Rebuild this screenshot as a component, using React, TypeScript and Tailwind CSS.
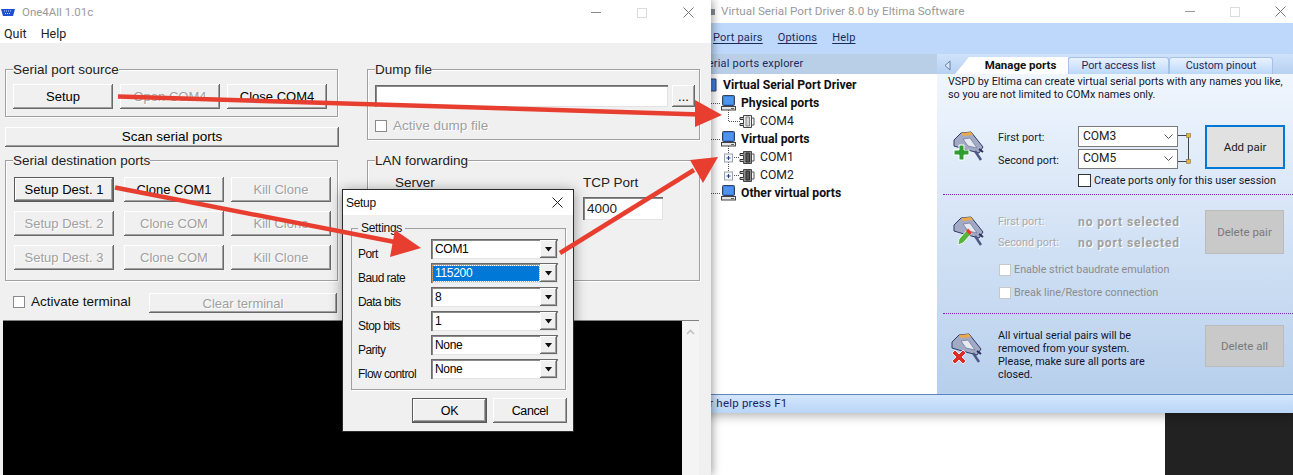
import React from "react";

const RAISED =
  "shadow-[inset_-1px_-1px_0_#696969,inset_1px_1px_0_#fff,inset_-2px_-2px_0_#a0a0a0]";
const SUNKEN =
  "shadow-[inset_1px_1px_0_#696969,inset_2px_2px_0_#8a8a8a,inset_-1px_-1px_0_#e3e3e3]";
const DISABLED = "text-[#a0a0a0] [text-shadow:1px_1px_0_#fff]";

function Btn({
  label,
  off,
  main,
  className = "",
}: {
  label: string;
  off?: boolean;
  main?: boolean;
  className?: string;
}) {
  return (
    <button
      className={`flex items-center justify-center bg-[#f0f0f0] pt-[1px] text-[13px] ${RAISED} ${
        off ? DISABLED : "text-black"
      } ${main ? "border border-[#5a5a5a]" : ""} ${className}`}
    >
      {label}
    </button>
  );
}

function Group({
  title,
  className = "",
  children,
}: {
  title: string;
  className?: string;
  children?: React.ReactNode;
}) {
  return (
    <div
      className={`relative border border-[#a0a0a0] shadow-[1px_1px_0_#fff,inset_1px_1px_0_#fff] ${className}`}
    >
      <span className="absolute -top-[8px] left-[7px] bg-[#f0f0f0] text-[13.5px] leading-[16px] text-[#222]">
        {title}
      </span>
      {children}
    </div>
  );
}

function Check({ className = "" }: { className?: string }) {
  return (
    <span
      className={`block h-[12px] w-[12px] border border-[#8a8a8a] bg-white ${className}`}
    />
  );
}

function Combo({ value, selected }: { value: string; selected?: boolean }) {
  return (
    <div
      className={`flex h-[20px] w-[127px] items-center bg-white pl-[2px] pr-[1px] ${SUNKEN}`}
    >
      <span
        className={`flex-1 pl-[2px] text-[12px] leading-[15px] tracking-[-0.3px] ${
          selected
            ? "mr-[1px] bg-[#0078d7] text-white outline-1 outline-dotted outline-[#e8a050]"
            : "text-black"
        }`}
      >
        {value}
      </span>
      <span
        className={`flex h-[18px] w-[17px] items-center justify-center bg-[#f0f0f0] ${RAISED}`}
      >
        <svg width="9" height="5" viewBox="0 0 9 5">
          <path d="M1 0h7L4.500 4.500z" fill="#111" />
        </svg>
      </span>
    </div>
  );
}

function DialogRow({
  label,
  value,
  selected,
}: {
  label: string;
  value: string;
  selected?: boolean;
}) {
  return (
    <div className="grid h-[24px] grid-cols-[73px_127px] items-start">
      <span className="mt-[8px] text-[12px] leading-[15px] tracking-[-0.55px] text-[#111]">
        {label}
      </span>
      <Combo value={value} selected={selected} />
    </div>
  );
}

function WinControls({ gap, color }: { gap: string; color: string }) {
  return (
    <div className={`flex items-center ${gap}`}>
      <span className={`block h-[1px] w-[10px] ${color}`} />
      <span className="block h-[10px] w-[10px] border border-[#dcdcdc]" />
      <svg width="11" height="11" viewBox="0 0 11 11">
        <path d="M.5.5l10 10M10.500.5l-10 10" stroke="#777" fill="none" />
      </svg>
    </div>
  );
}

function LeftWindow() {
  return (
    <div className="absolute left-0 top-0 z-10 flex h-[475px] w-[711px] flex-col bg-[#f0f0f0] font-['Liberation_Sans',sans-serif] shadow-[2px_0_8px_rgba(0,0,0,0.35)]">
      <div className="h-[43px] bg-white font-['Roboto',sans-serif]">
        <div className="flex h-[25px] items-center pr-[17px]">
          <svg width="14" height="7" viewBox="0 0 14 7" className="ml-[1px]">
            <path d="M0 0h14l-2 7H2z" fill="#1c4fd0" />
            <path d="M3 2h8M4 4.500h6" stroke="#cfe0ff" strokeDasharray="1 1" />
          </svg>
          <span className="ml-[7px] flex-1 pt-[1px] text-[11.5px] text-[#9a9a9a]">
            One4All 1.01c
          </span>
          <WinControls gap="gap-[36px]" color="bg-[#888]" />
        </div>
        <div className="flex h-[18px] items-center gap-[14px] pl-[4px] pt-[1px] text-[12.5px] text-[#222]">
          <span>Quit</span>
          <span>Help</span>
        </div>
      </div>

      <div className="grid grid-cols-[333px_333px] gap-x-[29px] px-[5px] pt-[26px]">
        <div className="flex flex-col">
          <Group title="Serial port source" className="h-[48px]">
            <div className="flex gap-[7px] pl-[7px] pt-[14px]">
              <Btn label="Setup" className="h-[25px] w-[100px]" />
              <Btn label="Open COM4" off className="h-[25px] w-[100px]" />
              <Btn label="Close COM4" className="h-[25px] w-[100px]" />
            </div>
          </Group>
          <Btn
            label="Scan serial ports"
            className="mt-[10px] h-[20px] w-[334px] !text-[13.5px]"
          />
          <Group title="Serial destination ports" className="mt-[13px] h-[121px]">
            <div className="grid grid-cols-[110px_107px_100px] gap-y-[9px] pl-[8px] pt-[16px]">
              <Btn label="Setup Dest. 1" main className="h-[25px] w-[100px]" />
              <Btn label="Clone COM1" className="h-[25px] w-[100px]" />
              <Btn label="Kill Clone" off className="h-[25px] w-[100px]" />
              <Btn label="Setup Dest. 2" off className="h-[25px] w-[100px]" />
              <Btn label="Clone COM" off className="h-[25px] w-[100px]" />
              <Btn label="Kill Clone" off className="h-[25px] w-[100px]" />
              <Btn label="Setup Dest. 3" off className="h-[25px] w-[100px]" />
              <Btn label="Clone COM" off className="h-[25px] w-[100px]" />
              <Btn label="Kill Clone" off className="h-[25px] w-[100px]" />
            </div>
          </Group>
        </div>
        <div className="flex flex-col">
          <Group title="Dump file" className="h-[71px]">
            <div className="flex gap-[4px] pl-[7px] pt-[15px]">
              <div className={`h-[22px] w-[293px] bg-white ${SUNKEN}`} />
              <Btn label="..." className="h-[22px] w-[23px]" />
            </div>
            <div className="mt-[12px] flex items-center gap-[6px] pl-[7px]">
              <Check className="bg-[#f0f0f0]" />
              <span className={`text-[13.5px] leading-[14px] ${DISABLED}`}>
                Active dump file
              </span>
            </div>
          </Group>
          <Group title="LAN forwarding" className="mt-[20px] h-[121px]">
            <div className="flex pl-[27px] pt-[14px] text-[13.5px] leading-[16px] text-[#222]">
              <span className="w-[188px]">Server</span>
              <div className="flex flex-col">
                <span>TCP Port</span>
                <div
                  className={`mt-[6px] flex h-[23px] w-[80px] items-center bg-white pl-[4px] ${SUNKEN}`}
                >
                  4000
                </div>
              </div>
            </div>
          </Group>
        </div>
      </div>

      <div className="flex items-center pl-[13px] pt-[12px]">
        <Check className="mb-[3px]" />
        <span className="mb-[3px] ml-[6px] w-[118px] text-[13.5px] leading-[16px] text-[#111]">
          Activate terminal
        </span>
        <Btn label="Clear terminal" off className="h-[20px] w-[188px]" />
      </div>

      <div className="ml-[3px] mt-[7px] flex w-[696px] flex-1 border-t border-[#808080]">
        <div className="flex-1 bg-black" />
        <div className="flex w-[17px] justify-center bg-[#f4f4f4] pt-[8px]">
          <svg width="9" height="6" viewBox="0 0 9 6">
            <path d="M1 5l3.500-3.500L8 5" fill="none" stroke="#c0c0c0" strokeWidth="1.600" />
          </svg>
        </div>
      </div>
    </div>
  );
}

function SetupDialog() {
  return (
    <div className="absolute left-[342px] top-[189px] z-20 flex h-[243px] w-[232px] flex-col border border-[#2b2b2b] bg-[#f0f0f0] font-['Liberation_Sans',sans-serif] shadow-[0_2px_12px_rgba(0,0,0,0.4)]">
      <div className="flex h-[25px] items-center justify-between bg-white pl-[3px] pr-[10px]">
        <span className="text-[12px] tracking-[-0.3px] text-[#111]">Setup</span>
        <svg width="11" height="11" viewBox="0 0 11 11">
          <path d="M.5.5l10 10M10.500.5l-10 10" stroke="#222" fill="none" />
        </svg>
      </div>
      <div className="relative mx-[8px] mt-[13px] h-[162px] w-[215px] border border-[#a0a0a0] shadow-[1px_1px_0_#fff]">
        <span className="absolute -top-[8px] left-[6px] bg-[#f0f0f0] px-[3px] text-[12px] leading-[15px] tracking-[-0.3px] text-[#111]">
          Settings
        </span>
        <div className="pl-[6px] pt-[10px]">
          <DialogRow label="Port" value="COM1" />
          <DialogRow label="Baud rate" value="115200" selected />
          <DialogRow label="Data bits" value="8" />
          <DialogRow label="Stop bits" value="1" />
          <DialogRow label="Parity" value="None" />
          <DialogRow label="Flow control" value="None" />
        </div>
      </div>
      <div className="ml-[69px] mt-[8px] flex gap-[6px] [&>button]:text-[12.5px] [&>button]:tracking-[-0.4px]">
        <Btn label="OK" main className="h-[25px] w-[75px]" />
        <Btn label="Cancel" className="h-[25px] w-[74px]" />
      </div>
    </div>
  );
}

function Computer() {
  return (
    <svg width="15" height="16" viewBox="0 0 15 16" className="shrink-0">
      <rect x="1.500" y=".5" width="12" height="10" rx="1" fill="#3f7fe0" stroke="#33435f" />
      <rect x="3" y="2" width="9" height="7" fill="#4f93ee" />
      <rect x=".5" y="11.500" width="14" height="3.500" fill="#e6e6e6" stroke="#444" />
      <path d="M10 13.500h3" stroke="#666" />
    </svg>
  );
}

function PortGlyph({ dark }: { dark?: boolean }) {
  const fill = dark ? "#8f8f8f" : "#efefef";
  return (
    <svg width="16" height="15" viewBox="0 0 16 15" className="shrink-0">
      <path d="M4.500 1.500h8v12h-8z" fill={fill} stroke="#444" />
      <path d="M7 3h3.500v9H7z" fill={dark ? "#555" : "#d5d5d5"} stroke={dark ? "#333" : "#888"} />
      <path d="M4.500 3.500H1v2h3.500M4.500 9.500H1v2h3.500" fill="#cfcfcf" stroke="#333" />
      <path d="M12.500 4H15v7h-2.500" fill="none" stroke="#555" />
    </svg>
  );
}

function TreeRow({
  pad,
  bold,
  text,
  icon,
}: {
  pad: string;
  bold?: boolean;
  text: string;
  icon: React.ReactNode;
}) {
  return (
    <div className={`flex h-[18px] items-center ${pad}`}>
      {icon}
      <span
        className={`ml-[5px] whitespace-nowrap text-[12.2px] ${
          bold ? "font-bold text-[#101010]" : "text-[#1a1a2a]"
        }`}
      >
        {text}
      </span>
    </div>
  );
}

function Expander({ y }: { y: number }) {
  return (
    <g>
      <rect x={34.5} y={y - 4} width="8" height="8" fill="#f4f6fa" stroke="#9aa2b0" />
      <path d={`M36.500 ${y}h4M38.500 ${y - 2}v4`} stroke="#24408a" />
    </g>
  );
}

function PortBadge({ kind }: { kind: "add" | "edit" | "del" }) {
  return (
    <svg width="38" height="34" viewBox="0 0 38 34" className="shrink-0">
      <path d="M4 12l7-7 10-1 12 15-4 6-15-4-10-3z" fill="#a3aac6" stroke="#2f3a68" />
      <path d="M11 5l10-1 2 3-10 1z" fill="#e9a94c" />
      <path d="M13 11l7-1 7 10-9-2z" fill="#e6e9f2" stroke="#6a7398" strokeWidth=".7" />
      <path d="M25 23l6 9" stroke="#4e5a86" strokeWidth="2.500" />
      <path d="M29 21l4 3" stroke="#27335e" strokeWidth="2" />
      {kind === "add" && (
        <path d="M9 17h5v5h5v5h-5v5H9v-5H4v-5h5z" fill="#2d9e2f" stroke="#fff" strokeWidth="1" />
      )}
      {kind === "edit" && (
        <>
          <path d="M8 32l1-6 9-10 4 4-9 10z" fill="#55b43a" stroke="#fff" strokeWidth=".8" />
          <path d="M16 18l2-2.500 4 4-2 2.500z" fill="#e33d2c" />
        </>
      )}
      {kind === "del" && (
        <path d="M7 20l4 4 4-4 3 3-4 4 4 4-3 3-4-4-4 4-3-3 4-4-4-4z" fill="#dc2b2b" stroke="#fff" strokeWidth=".8" />
      )}
    </svg>
  );
}

function PortSelect({ value }: { value: string }) {
  return (
    <div className="flex h-[21px] w-[100px] items-center justify-between border border-[#7a7a7a] bg-white pl-[4px] pr-[4px] text-[12px] text-[#222]">
      {value}
      <svg width="9" height="5" viewBox="0 0 9 5">
        <path d="M.5.5l4 4 4-4" fill="none" stroke="#555" />
      </svg>
    </div>
  );
}

function RightWindow() {
  return (
    <div className="absolute left-[690px] top-0 flex h-[413px] w-[603px] flex-col bg-white font-['Roboto',sans-serif] shadow-[0_3px_10px_rgba(0,0,0,0.3)]">
      <div className="flex h-[23px] items-center pr-[7px]">
        <svg width="6" height="6" viewBox="0 0 6 6" className="ml-[19px] mr-[6px]">
          <rect width="6" height="6" fill="#8a8f98" />
        </svg>
        <span className="flex-1 text-[11.7px] text-[#9a9a9a]">
          Virtual Serial Port Driver 8.0 by Eltima Software
        </span>
        <WinControls gap="gap-[35px]" color="bg-[#999]" />
      </div>
      <div className="flex h-[31px] items-center bg-[#bdd8fb] pl-[23px] text-[11px] tracking-[0.2px] text-[#1c2a5c]">
        <span className="underline underline-offset-2">Port pairs</span>
        <span className="ml-[15px] underline underline-offset-2">Options</span>
        <span className="ml-[15px] underline underline-offset-2">Help</span>
      </div>

      <div className="flex flex-1">
        <div className="flex w-[247px] flex-col bg-white">
          <div className="flex h-[20px] items-center bg-[#b9cfe8] pl-[11px] text-[11px] tracking-[0.2px] text-[#1c2a5c]">
            Serial ports explorer
          </div>
          <div className="relative flex-1 pt-[2px]">
            <svg width="60" height="130" className="absolute left-0 top-0">
              <g stroke="#555" strokeDasharray="1 1" fill="none">
                <path d="M21 29.500h10M21 65.500h10M21 119.500h10" />
                <path d="M38.500 36v11.500H50M38.500 72v30M42 83.500h8M42 101.500h8" />
              </g>
              <Expander y={84} />
              <Expander y={102} />
            </svg>
            <div className="relative">
              <TreeRow
                pad="pl-[18px]"
                bold
                text="Virtual Serial Port Driver"
                icon={
                  <svg width="10" height="14" viewBox="0 0 10 14">
                    <path d="M2 1h6v12H2z" fill="#3f7fe0" stroke="#33435f" />
                  </svg>
                }
              />
              <TreeRow pad="pl-[31px]" bold text="Physical ports" icon={<Computer />} />
              <TreeRow pad="pl-[49px]" text="COM4" icon={<PortGlyph />} />
              <TreeRow pad="pl-[31px]" bold text="Virtual ports" icon={<Computer />} />
              <TreeRow pad="pl-[49px]" text="COM1" icon={<PortGlyph dark />} />
              <TreeRow pad="pl-[49px]" text="COM2" icon={<PortGlyph dark />} />
              <TreeRow pad="pl-[31px]" bold text="Other virtual ports" icon={<Computer />} />
            </div>
          </div>
        </div>

        <div className="flex w-[356px] flex-col">
          <div className="flex h-[20px] items-end bg-gradient-to-b from-[#cfe2fb] to-[#b7d1f1] text-[10.8px] text-[#1c2a5c]">
            <span className="mb-[3px] ml-[7px] w-[11px]">
              <svg width="7" height="11" viewBox="0 0 7 11">
                <path d="M6 1L1 5.500 6 10z" fill="#dbe7f7" stroke="#5f7fa8" />
              </svg>
            </span>
            <span className="flex h-[17px] w-[113px] items-center justify-center bg-white pl-[18px] text-[11.5px] font-bold text-[#111] [clip-path:polygon(14px_0,100%_0,100%_100%,0_100%)]">
              Manage ports
            </span>
            <span className="flex h-[17px] w-[101px] items-center justify-center rounded-t-[3px] border border-b-0 border-[#a6c2e4] bg-gradient-to-b from-[#e9f2fe] to-[#bcd8f9]">
              Port access list
            </span>
            <span className="flex h-[17px] w-[104px] items-center justify-center rounded-t-[3px] border border-b-0 border-[#a6c2e4] bg-gradient-to-b from-[#e9f2fe] to-[#bcd8f9]">
              Custom pinout
            </span>
          </div>

          <div className="flex flex-1 flex-col bg-gradient-to-b from-[#f0f6fe] to-[#b7cfec] text-[10.8px] leading-[13px] text-[#14192e]">
            <div className="h-[120px] pt-[1px]">
              <p className="whitespace-nowrap pl-[11px]">
                VSPD by Eltima can create virtual serial ports with any names you like,
                <br />
                so you are not limited to COMx names only.
              </p>
              <div className="mt-[24px] grid grid-cols-[61px_80px_100px_27px_80px] grid-rows-[44px_auto]">
                <div className="pl-[13px] pt-[3px]">
                  <PortBadge kind="add" />
                </div>
                <div className="pt-[6px]">
                  <div>First port:</div>
                  <div className="mt-[10px]">Second port:</div>
                </div>
                <div className="flex flex-col gap-[2px] pt-[1px]">
                  <PortSelect value="COM3" />
                  <PortSelect value="COM5" />
                </div>
                <svg width="27" height="44" viewBox="0 0 27 44">
                  <path d="M0 10.500h10.500V36.500H0" fill="none" stroke="#444" />
                  <rect x="8.500" y="8.500" width="4" height="4" fill="#e8b52c" stroke="#665" strokeWidth=".5" />
                  <rect x="8.500" y="34.500" width="4" height="4" fill="#e8b52c" stroke="#665" strokeWidth=".5" />
                </svg>
                <button className="h-[44px] w-[80px] border-2 border-[#0078d7] bg-[#e1e1e1] text-[11.5px] text-[#222]">
                  Add pair
                </button>
                <div className="col-span-3 col-start-3 mt-[5px] flex items-center">
                  <span className="block h-[13px] w-[13px] border border-[#333] bg-white" />
                  <span className="ml-[3px] whitespace-nowrap">
                    Create ports only for this user session
                  </span>
                </div>
              </div>
            </div>

            <div className="ml-[6px] border-t border-dotted border-[#7a2cb0]" />

            <div className="flex h-[118px] text-[#8c8c8c]">
              <div className="ml-[13px] mt-[18px] w-[48px]">
                <PortBadge kind="edit" />
              </div>
              <div className="w-[207px] pt-[20px]">
                <div className="flex h-[21px] items-start text-[#aaa] [text-shadow:1px_1px_0_#fff]">
                  <span className="w-[80px]">First port:</span>
                  <span className="mt-[1px] text-[12px] font-bold tracking-[0.9px] text-[#a0a0a0]">
                    no port selected
                  </span>
                </div>
                <div className="flex h-[21px] items-start text-[#aaa] [text-shadow:1px_1px_0_#fff]">
                  <span className="w-[80px]">Second port:</span>
                  <span className="mt-[1px] text-[12px] font-bold tracking-[0.9px] text-[#a0a0a0]">
                    no port selected
                  </span>
                </div>
                <div className="mt-[6px] flex items-center gap-[3px] pl-[1px]">
                  <span className="block h-[12px] w-[12px] border border-[#c8c8c8] bg-white" />
                  <span className="whitespace-nowrap">Enable strict baudrate emulation</span>
                </div>
                <div className="mt-[10px] flex items-center gap-[3px] pl-[1px]">
                  <span className="block h-[12px] w-[12px] border border-[#c8c8c8] bg-white" />
                  <span className="whitespace-nowrap">Break line/Restore connection</span>
                </div>
              </div>
              <button className="mt-[15px] h-[44px] w-[79px] border border-[#bbb] bg-[#c9c9c9] text-[11.5px] text-[#7a7a7a]">
                Delete pair
              </button>
            </div>

            <div className="ml-[6px] border-t border-dotted border-[#7a2cb0]" />

            <div className="flex flex-1">
              <div className="ml-[11px] mt-[16px] w-[50px]">
                <PortBadge kind="del" />
              </div>
              <p className="w-[207px] pt-[15px] text-[#10152a]">
                All virtual serial pairs will be
                <br />
                removed from your system.
                <br />
                Please, make sure all ports are
                <br />
                closed.
              </p>
              <button className="mt-[11px] h-[42px] w-[79px] border border-[#bbb] bg-[#c9c9c9] text-[11.5px] text-[#7a7a7a]">
                Delete all
              </button>
            </div>
          </div>
        </div>
      </div>

      <div className="flex h-[19px] items-center border-t border-[#5a88bd] bg-gradient-to-b from-[#d4e6fc] to-[#b9d5f8] pl-[6px] text-[11.5px] tracking-[0.2px] text-[#241a66]">
        For help press F1
      </div>
    </div>
  );
}

function Arrows() {
  return (
    <svg width="1293" height="475" className="pointer-events-none absolute left-0 top-0 z-30">
      <g stroke="#e73e30" strokeWidth="4.500" fill="none">
        <path d="M118 96.500L700 114.500" />
        <path d="M115 187.500L400 243" />
        <path d="M560 253L694 170" />
      </g>
      <g fill="#e73e30">
        <path d="M695 100L722 115L695 127z" />
        <path d="M395 230L421 248L390 257z" />
        <path d="M690 160L718 157L703 183z" />
      </g>
    </svg>
  );
}

export default function App() {
  return (
    <div className="relative h-[475px] w-[1293px] overflow-hidden bg-white">
      <div className="absolute left-[1165px] top-[413px] h-[62px] w-[128px] bg-[#222]" />
      <RightWindow />
      <LeftWindow />
      <SetupDialog />
      <Arrows />
    </div>
  );
}
